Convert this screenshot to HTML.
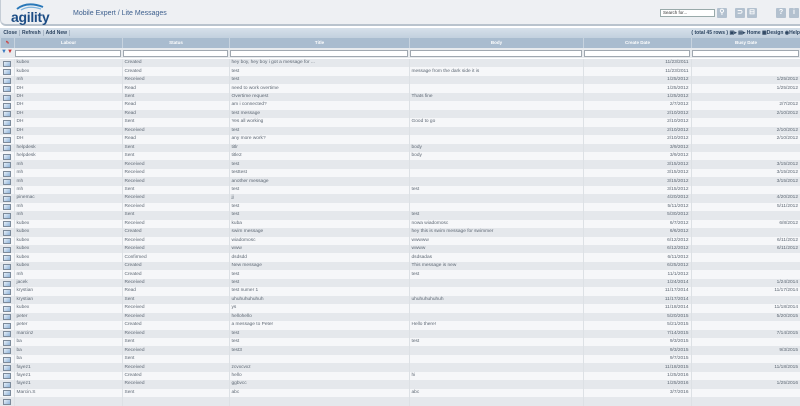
<!DOCTYPE html>
<html><head><meta charset="utf-8"><style>
*{margin:0;padding:0;box-sizing:border-box}
body{width:800px;height:400px;overflow:hidden;background:#fff;font-family:"Liberation Sans",sans-serif;position:relative}
#top{position:absolute;left:0;top:0;width:800px;height:26px;background:#eef0f3;border-bottom:2px solid #b9c3cd;border-left:1px solid #c5cdd6;border-radius:0 0 0 6px}
.logo{position:absolute;left:10px;top:9px;font-size:14px;font-weight:bold;color:#1d4d85;letter-spacing:-0.3px}
.title{position:absolute;left:72px;top:10px;font-size:7px;color:#3d5f8d}
.search{position:absolute;left:659px;top:9px;width:55px;height:8px;border:1px solid #9aa;background:#fff;font-size:4.5px;padding-left:2px;line-height:6px;color:#333}
.btn{position:absolute;top:8px;width:10px;height:10px;background:#b3c1cf;border-radius:1px;color:#fff;font-size:7px;text-align:center;line-height:10px;font-weight:bold}
#tb{position:absolute;left:0;top:28px;width:800px;height:10px;background:linear-gradient(#d6e0ea,#c2d0de);font-size:5px;font-weight:bold;color:#2c4460;line-height:10px}
#tb span{padding:0 2px;border-right:1px solid #a9b7c6}
#hd{position:absolute;left:0;top:38px;width:800px;height:10px;background:#a9bccf;font-size:4.5px;color:#fff;font-weight:bold}
#hd div,#fl div{position:absolute;top:0;height:100%;text-align:center;line-height:10px;border-left:1px solid #c7d3df}
#fl{position:absolute;left:0;top:48px;width:800px;height:10px;background:#e8ebee}
#fl div{top:2px;height:7px;background:#fff;border:1px solid #a0a8b0}
table{position:absolute;left:0;top:59px;width:800px;border-collapse:collapse;table-layout:fixed;font-size:4.8px;color:#5e6874}
td{height:8.46px;padding:0 2px;white-space:nowrap;overflow:hidden;border-left:1px solid #dde1e5;line-height:8px}
tr:nth-child(odd){background:#e5e8ec}
tr:nth-child(even){background:#f6f7f9}
td.r{text-align:right}
td.i{padding:0;border-left:none}
.ic{display:block;margin:1px 0 0 3px;width:8px;height:6px;border:1px solid #7c8a9a;background:linear-gradient(135deg,#e8f0f8,#8fb4da)}
</style></head><body>
<div id="top"><div class="logo">agility</div>
<svg style="position:absolute;left:14px;top:2px" width="30" height="9"><path d="M2 7 Q12 -1 28 5" stroke="#2a78b8" stroke-width="2" fill="none"/><path d="M6 8 Q14 3 26 7" stroke="#7fb4dd" stroke-width="1.3" fill="none"/></svg>
<div class="title">Mobile Expert / Lite Messages</div>
<div class="search">Search for...</div>
<div class="btn" style="left:716px">⚲</div><div class="btn" style="left:734px">⊃</div><div class="btn" style="left:746px">⊟</div>
<div class="btn" style="left:775px">?</div><div class="btn" style="left:788px">i</div></div>
<div id="tb">&nbsp;<span>Close</span><span>Refresh</span><span>Add New</span>
<div style="position:absolute;right:0;top:0">( total 45 rows ) ▣▸ ▤▸ Home ▦Design ◉Help</div></div>
<div id="hd"><div style="left:0;width:14px;color:#c44">✎</div><div style="left:14px;width:108px">Labour</div><div style="left:122px;width:107px">Status</div><div style="left:229px;width:180px">Title</div><div style="left:409px;width:174px">Body</div><div style="left:583px;width:108px">Create Date</div><div style="left:691px;width:109px">Busy Date</div></div>
<div id="fl"><span style="position:absolute;left:1px;top:1px;font-size:6px;color:#3a7ac0">▼<span style="color:#c33">▼</span></span><div style="left:15px;width:106px"></div><div style="left:123px;width:105px"></div><div style="left:230px;width:178px"></div><div style="left:410px;width:172px"></div><div style="left:584px;width:106px"></div><div style="left:692px;width:107px"></div></div>
<table><colgroup><col style="width:14px"><col style="width:108px"><col style="width:107px"><col style="width:180px"><col style="width:174px"><col style="width:108px"><col style="width:109px"></colgroup><tbody id="b"></tbody></table>
<script>
var d=[["kubex","Created","hey boy, hey boy i got a message for ...","","11/23/2011",""],["kubex","Created","test","message from the dark side it is","11/23/2011",""],["mh","Received","test","","1/25/2012","1/25/2012"],["DH","Read","need to work overtime","","1/25/2012","1/25/2012"],["DH","Sent","Overtime request","Thats fine","1/25/2012",""],["DH","Read","am i connected?","","2/7/2012","2/7/2012"],["DH","Read","test message","","2/10/2012","2/10/2012"],["DH","Sent","Yes all working","Good to go","2/10/2012",""],["DH","Received","test","","2/10/2012","2/10/2012"],["DH","Read","any more work?","","2/10/2012","2/10/2012"],["helpdesk","Sent","titlr","body","3/9/2012",""],["helpdesk","Sent","title2","body","3/9/2012",""],["mh","Received","test","","3/15/2012","3/15/2012"],["mh","Received","testtest","","3/15/2012","3/15/2012"],["mh","Received","another message","","3/15/2012","3/15/2012"],["mh","Sent","test","test","3/15/2012",""],["pinemac","Received","jj","","4/20/2012","4/20/2012"],["mh","Received","test","","5/11/2012","5/11/2012"],["mh","Sent","test","test","5/30/2012",""],["kubex","Received","kuba","nowa wiadomosc","6/7/2012","6/8/2012"],["kubex","Created","swim message","hey this is swim message for swimmer","6/6/2012",""],["kubex","Received","wiadomosc","wwwww","6/12/2012","6/11/2012"],["kubex","Received","www","wwww","6/12/2012","6/11/2012"],["kubex","Confirmed","dsdsdd","dsdsadas","6/11/2012",""],["kubex","Created","New message","This message is new","6/25/2012",""],["mh","Created","test","test","11/1/2012",""],["jacek","Received","test","","1/24/2014","1/24/2014"],["krystian","Read","test numer 1","","11/17/2014","11/17/2014"],["krystian","Sent","uhuhuhuhuhuh","uhuhuhuhuhuh","11/17/2014",""],["kubex","Received","ys","","11/18/2014","11/18/2014"],["peter","Received","hellohello","","5/20/2015","5/20/2015"],["peter","Created","a message to Peter","Hello there!","5/21/2015",""],["marcinz","Received","test","","7/14/2015","7/14/2015"],["ba","Sent","test","test","9/3/2015",""],["ba","Received","test3","","9/3/2015","9/3/2015"],["ba","Sent","","","9/7/2015",""],["fayez1","Received","zcvxcvxz","","11/18/2015","11/18/2015"],["fayez1","Created","hello","hi","1/25/2016",""],["fayez1","Received","ggbvcc","","1/25/2016","1/25/2016"],["Marcin.S","Sent","abc","abc","3/7/2016",""],["","","","","",""]];
var h="";d.forEach(function(r){h+='<tr><td class="i"><span class="ic"></span></td><td>'+r[0]+'</td><td>'+r[1]+'</td><td>'+r[2]+'</td><td>'+r[3]+'</td><td class="r">'+r[4]+'</td><td class="r">'+r[5]+'</td></tr>'});
document.getElementById("b").innerHTML=h;
</script>
</body></html>
